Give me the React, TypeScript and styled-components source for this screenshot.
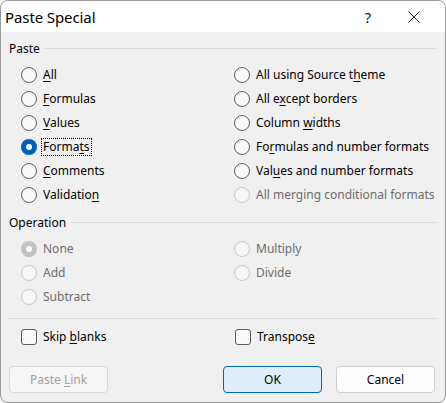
import React from "react";
import styled, { createGlobalStyle, css } from "styled-components";

const Global = createGlobalStyle`
  html, body { margin: 0; padding: 0; background: #f3f3f3; }
  body { font-family: "Noto Sans", "Segoe UI", sans-serif; font-size: 12px; color: #000; }
  * { box-sizing: border-box; }
`;

const Window = styled.div`
  width: 446px;
  height: 403px;
  border: 1px solid #9a9a9a;
  border-radius: 8px;
  overflow: hidden;
  background: #f0f0f0;
  display: flex;
  flex-direction: column;
`;

const TitleBar = styled.div`
  height: 31px;
  background: #ffffff;
  display: flex;
  align-items: center;
  padding: 0 8px 0 4px;
`;

const Title = styled.div`
  flex: 1;
  font-size: 15px;
  color: #000;
  letter-spacing: -0.1px;
`;

const CaptionButton = styled.div`
  width: 46px;
  height: 31px;
  display: flex;
  align-items: center;
  justify-content: center;
  font-size: 15px;
  color: #1a1a1a;
`;

const Body = styled.div`
  flex: 1;
  display: flex;
  flex-direction: column;
  padding: 8px 8px 0 8px;
`;

const GroupHeader = styled.div<{ $top?: number }>`
  display: flex;
  align-items: center;
  height: 16px;
  gap: 5px;
  margin-top: ${(p) => p.$top ?? 0}px;
  &::after {
    content: "";
    flex: 1;
    height: 1px;
    background: #d9d9d9;
  }
`;

const Grid = styled.div<{ $top: number; $rows: number }>`
  display: grid;
  grid-template-columns: 213px 1fr;
  grid-auto-flow: column;
  grid-template-rows: repeat(${(p) => p.$rows}, 24px);
  margin: ${(p) => p.$top}px 0 0 12px;
`;

const Option = styled.label<{ $disabled?: boolean }>`
  display: flex;
  align-items: center;
  gap: 5px;
  height: 24px;
  color: ${(p) => (p.$disabled ? "#6d6d6d" : "#000")};
`;

const Circle = styled.span<{ $checked?: boolean; $disabled?: boolean }>`
  width: 16px;
  height: 16px;
  border-radius: 50%;
  flex: none;
  position: relative;
  ${(p) =>
    p.$checked
      ? css`
          background: ${p.$disabled ? "#c2c2c2" : "#005fb8"};
          &::after {
            content: "";
            position: absolute;
            left: 5px;
            top: 5px;
            width: 6px;
            height: 6px;
            border-radius: 50%;
            background: #fff;
          }
        `
      : css`
          background: ${p.$disabled ? "#f6f6f6" : "#f9f9f9"};
          border: 1px solid ${p.$disabled ? "#cacaca" : "#5d5d5d"};
        `}
`;

const Text = styled.span<{ $focus?: boolean }>`
  padding: 0 1px;
  margin-left: -1px;
  line-height: 16px;
  border: 1px dotted ${(p) => (p.$focus ? "#000" : "transparent")};
`;

const Key = styled.span`
  text-decoration: underline;
  text-underline-offset: 2px;
  text-decoration-thickness: 1px;
`;

const Separator = styled.div`
  height: 1px;
  background: #d9d9d9;
  margin-top: 9px;
`;

const CheckRow = styled.div`
  display: grid;
  grid-template-columns: 214px 1fr;
  margin: 6px 0 0 12px;
`;

const Box = styled.span`
  width: 16px;
  height: 16px;
  border-radius: 3px;
  border: 1px solid #5d5d5d;
  background: #f9f9f9;
  flex: none;
`;

const Buttons = styled.div`
  display: flex;
  align-items: center;
  margin-top: 17px;
  padding-right: 2px;
  gap: 14px;
`;

const Spacer = styled.div`
  flex: 1;
`;

const Button = styled.div<{ $variant?: "default" | "primary" | "disabled" }>`
  width: 99px;
  height: 27px;
  border-radius: 4px;
  display: flex;
  align-items: center;
  justify-content: center;
  border: 1px solid #d0d0d0;
  background: #fdfdfd;
  color: #000;
  ${(p) =>
    p.$variant === "primary" &&
    css`
      border-color: #0067c0;
      background: #e0eef9;
    `}
  ${(p) =>
    p.$variant === "disabled" &&
    css`
      border-color: #d8d8d8;
      background: #f6f6f6;
      color: #a2a2a2;
    `}
`;

type Opt = { label: React.ReactNode; checked?: boolean; disabled?: boolean; focus?: boolean };

const u = (s: string) => <Key>{s}</Key>;

const pasteOpts: Opt[] = [
  { label: <>{u("A")}ll</> },
  { label: <>{u("F")}ormulas</> },
  { label: <>{u("V")}alues</> },
  { label: <>Forma{u("t")}s</>, checked: true, focus: true },
  { label: <>{u("C")}omments</> },
  { label: <>Validatio{u("n")}</> },
  { label: <>All using Source t{u("h")}eme</> },
  { label: <>All e{u("x")}cept borders</> },
  { label: <>Column {u("w")}idths</> },
  { label: <>Fo{u("r")}mulas and number formats</> },
  { label: <>Val{u("u")}es and number formats</> },
  { label: "All merging conditional formats", disabled: true },
];

const opOpts: Opt[] = [
  { label: "None", checked: true, disabled: true },
  { label: "Add", disabled: true },
  { label: "Subtract", disabled: true },
  { label: "Multiply", disabled: true },
  { label: "Divide", disabled: true },
];

function Radio({ o }: { o: Opt }) {
  return (
    <Option $disabled={o.disabled}>
      <Circle $checked={o.checked} $disabled={o.disabled} />
      <Text $focus={o.focus}>{o.label}</Text>
    </Option>
  );
}

export default function App() {
  return (
    <>
      <Global />
      <Window>
        <TitleBar>
          <Title>Paste Special</Title>
          <CaptionButton>?</CaptionButton>
          <CaptionButton>
            <svg width="12" height="12" viewBox="0 0 12 12">
              <path d="M0.5 0.5 L11.5 11.5 M11.5 0.5 L0.5 11.5" stroke="#1a1a1a" strokeWidth="1" />
            </svg>
          </CaptionButton>
        </TitleBar>
        <Body>
          <GroupHeader>Paste</GroupHeader>
          <Grid $top={7} $rows={6}>
            {pasteOpts.map((o, i) => (
              <Radio key={i} o={o} />
            ))}
          </Grid>
          <GroupHeader $top={7}>Operation</GroupHeader>
          <Grid $top={7} $rows={3}>
            {opOpts.map((o, i) => (
              <Radio key={i} o={o} />
            ))}
          </Grid>
          <Separator />
          <CheckRow>
            <Option>
              <Box />
              <Text>Skip {u("b")}lanks</Text>
            </Option>
            <Option>
              <Box />
              <Text>Transpos{u("e")}</Text>
            </Option>
          </CheckRow>
          <Buttons>
            <Button $variant="disabled">
              <span>Paste {u("L")}ink</span>
            </Button>
            <Spacer />
            <Button $variant="primary">OK</Button>
            <Button>Cancel</Button>
          </Buttons>
        </Body>
      </Window>
    </>
  );
}
